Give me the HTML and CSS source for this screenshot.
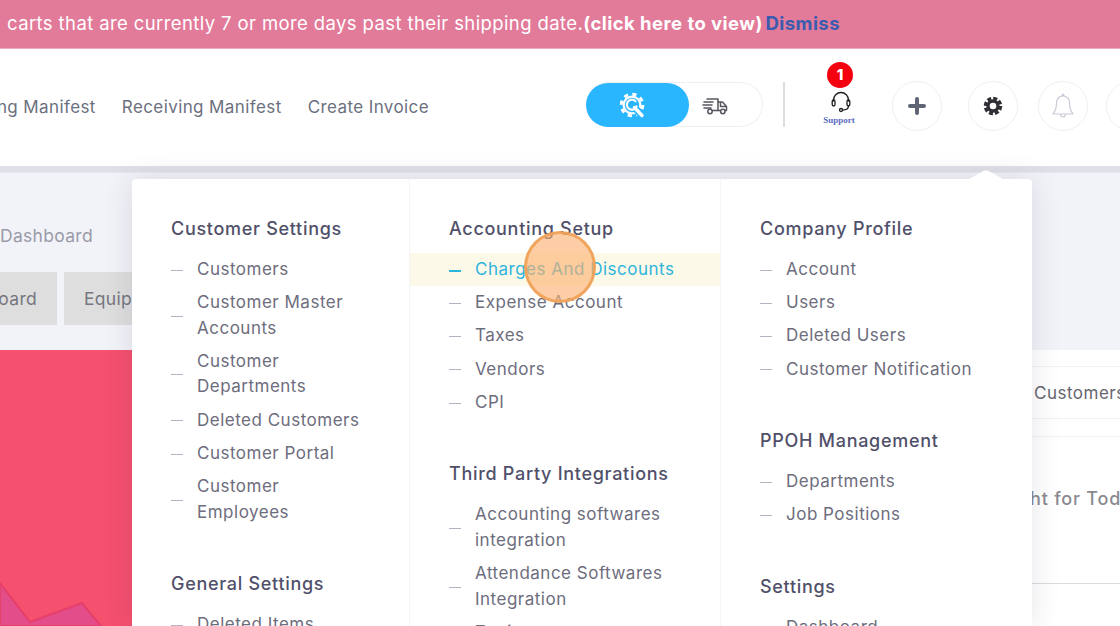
FILE: index.html
```html
<!doctype html>
<html lang="en">
<head>
  <meta charset="utf-8" />
  <meta name="viewport" content="width=device-width,initial-scale=1" />
  <title>Settings menu</title>
  <link rel="stylesheet" href="styles.css">
</head>
<body>
  <!-- Alert banner -->
  <div class="banner">
    <span>All carts that are currently 7 or more days past their shipping date.<b>(click here to view)</b> <b class="dismiss">Dismiss</b></span>
  </div>

  <!-- Header -->
  <header class="topbar">
    <nav class="nav">
      <a>Shipping Manifest</a>
      <a>Receiving Manifest</a>
      <a>Create Invoice</a>
    </nav>

    <div class="toggle">
      <div class="toggleOn">
        <svg width="28" height="28" viewBox="0 0 28 28" fill="none" stroke="#fff">
          <circle cx="13" cy="13" r="10.800" stroke-width="3" stroke-dasharray="4.200 4.280"/>
          <circle cx="13" cy="13" r="8.400" stroke-width="2.300"/>
          <path d="M15.500 15.500l8 8.500" stroke="#29b6ff" stroke-width="7"/>
          <path d="M16.500 9.300a5 5 0 1 0 1 5.200" stroke-width="2.200" stroke-linecap="round"/>
          <path d="M15.500 15.500l7.500 8" stroke-width="3.400" stroke-linecap="round"/>
        </svg>
      </div>
      <div class="toggleOff">
        <svg width="26" height="18" viewBox="0 0 26 18" fill="none" stroke="#55555f" stroke-width="1.500" stroke-linecap="round" stroke-linejoin="round">
          <path d="M5 2h11v11.500h-5.500M2 5h9M1 8h9M2 11h7"/>
          <path d="M16 5h4.500l4 4.500v4h-1.500M16 13.500h2.500M18.500 5.500v4h5.500"/>
          <circle cx="8" cy="14.500" r="2.200"/>
          <circle cx="20.800" cy="14.500" r="2.200"/>
        </svg>
      </div>
    </div>

    <div class="vline"></div>

    <div class="support">
      <span class="badge">1</span>
      <svg width="22" height="22" viewBox="0 0 22 22" fill="none" stroke="#1d1d22" stroke-width="1.300" stroke-linecap="round">
        <path d="M3.500 10V9a7.500 7.500 0 0 1 15 0v1"/>
        <rect x="2.200" y="9" width="2.800" height="6" rx="1.400"/>
        <rect x="17" y="9" width="2.800" height="6" rx="1.400"/>
        <path d="M18.500 15c0 2.500-2.500 4-6 4"/>
        <circle cx="11" cy="19" r="1.500"/>
      </svg>
      <small>Support</small>
    </div>

    <div class="roundBtn">
      <svg width="18" height="18" viewBox="0 0 18 18"><path d="M9 2v14M2 9h14" stroke="#5f6475" stroke-width="4" stroke-linecap="round"/></svg>
    </div>
    <div class="roundBtn">
      <svg width="20" height="20" viewBox="0 0 20 20" fill="none" stroke="#2f2f35">
        <circle cx="10" cy="10" r="7.500" stroke-width="3.600" stroke-dasharray="3.900 1.990"/>
        <circle cx="10" cy="10" r="5" stroke-width="3.400"/>
      </svg>
    </div>
    <div class="roundBtn">
      <svg width="22" height="26" viewBox="0 0 22 26" fill="none" stroke="#c9cad6" stroke-width="1.200" stroke-linejoin="round">
        <path d="M11 3c-4 0-6.500 3-6.500 7 0 5-1 8-3.500 11h20c-2.500-3-3.500-6-3.500-11 0-4-2.500-7-6.500-7zM9.500 3.200 11 1l1.500 2.200M8.500 21c0 2 1 3 2.500 3s2.500-1 2.500-3"/>
      </svg>
    </div>
    <div class="roundBtn"></div>
  </header>

  <!-- Page behind the menu -->
  <main class="page">
    <div class="pageTitle">Dashboard</div>
    <div class="tabs">
      <div class="tab tabFirst">Dashboard</div>
      <div class="tab">Equipment</div>
    </div>
    <div class="cards">
      <div class="pinkCard">
        <svg class="chart" width="132" height="276" viewBox="0 0 132 276"><path d="M0 233 30 272 82 253 101 276 0 276Z" fill="#e24d8a" stroke="#e53f6b" stroke-width="2"/></svg>
      </div>
      <div class="sideCard">
        <div class="sideTop"></div>
        <div class="sideRow">Customers</div>
        <div class="sideGap"></div>
        <div class="sideBody">Freight for Today</div>
      </div>
    </div>
  </main>

  <!-- Settings mega menu -->
  <div class="menu">
    <div class="menuCol">
      <h4>Customer Settings</h4>
      <ul>
        <li>Customers</li>
        <li>Customer Master Accounts</li>
        <li>Customer Departments</li>
        <li>Deleted Customers</li>
        <li>Customer Portal</li>
        <li>Customer Employees</li>
      </ul>
      <h4>General Settings</h4>
      <ul>
        <li>Deleted Items</li>
      </ul>
    </div>
    <div class="menuCol">
      <h4>Accounting Setup</h4>
      <ul>
        <li class="active">Charges And Discounts</li>
        <li>Expense Account</li>
        <li>Taxes</li>
        <li>Vendors</li>
        <li>CPI</li>
      </ul>
      <h4>Third Party Integrations</h4>
      <ul>
        <li>Accounting softwares integration</li>
        <li>Attendance Softwares Integration</li>
        <li>Zapier</li>
      </ul>
    </div>
    <div class="menuCol">
      <h4>Company Profile</h4>
      <ul>
        <li>Account</li>
        <li>Users</li>
        <li>Deleted Users</li>
        <li>Customer Notification</li>
      </ul>
      <h4>PPOH Management</h4>
      <ul>
        <li>Departments</li>
        <li>Job Positions</li>
      </ul>
      <h4>Settings</h4>
      <ul>
        <li>Dashboard</li>
      </ul>
    </div>
  </div>
  <div class="menuArrow"></div>
  <div class="clickDot"></div>
</body>
</html>
```

FILE: styles.css
```css
:root{
  --font: Inter, "Open Sans", "Liberation Sans", sans-serif;
  --line: #f1f1f5;
  --text: #6d6d7d;
  --head: #50506a;
  --blue: #2db4dd;
}

*{ box-sizing:border-box }
html, body{ height:100%; }
body{
  margin:0;
  font-family:var(--font);
  background:#f2f3f8;
  overflow:hidden;
}

/* Banner */
.banner{
  height:49px;
  display:flex;
  align-items:center;
  justify-content:flex-end;
  padding:0 280px 2px 0;
  background:#e27a9a;
  border-bottom:1px solid #e9a9c0;
  color:#fff;
  font-size:18.500px;
  letter-spacing:.39px;
  white-space:nowrap;
  overflow:hidden;
}
.banner span{ flex:none; }
.banner b{ font-weight:700; letter-spacing:.45px; }
.banner .dismiss{ color:#3a5cb0; margin-left:-3px; }

/* Header */
.topbar{
  height:117px;
  padding-bottom:1px;
  display:flex;
  align-items:center;
  background:#fff;
  overflow:hidden;
}
.nav{
  flex:none;
  width:429px;
  display:flex;
  justify-content:flex-end;
  gap:26px;
  margin-right:157px;
  white-space:nowrap;
  overflow:hidden;
  font-size:17px;
  letter-spacing:.4px;
  color:#6b7080;
}
.nav a{ flex:none; }

.toggle{
  flex:none;
  width:177px;
  height:45px;
  margin-top:-6px;
  margin-right:20px;
  display:flex;
  border:1px solid #f0f0f4;
  border-left:0;
  border-radius:23px;
}
.toggleOn{
  width:103px;
  height:44px;
  display:flex;
  align-items:center;
  justify-content:center;
  background:#29b6ff;
  border-radius:22px;
}
.toggleOn svg{ margin:2px 0 0 -9px; }
.toggleOff{
  flex:1;
  display:flex;
  align-items:center;
  justify-content:center;
  padding:3px 22px 0 0;
}
.vline{
  flex:none;
  width:2px;
  height:45px;
  margin-top:-6px;
  margin-right:27px;
  background:#dddde0;
}

.support{
  flex:none;
  position:relative;
  width:54px;
  height:40px;
  margin-top:10px;
  margin-right:26px;
  display:flex;
  flex-direction:column;
  align-items:center;
}
.support svg{ display:block; margin:-1px 0 0 3px; }
.support small{
  font-family:"Liberation Serif", serif;
  font-weight:700;
  font-size:9px;
  line-height:15px;
  color:#5a6bc0;
}
.badge{
  position:absolute;
  left:15px;
  top:-30px;
  width:26px;
  height:26px;
  border-radius:50%;
  background:#f5000f;
  color:#fff;
  font-size:15px;
  font-weight:800;
  line-height:26px;
  text-align:center;
}

.roundBtn{
  flex:none;
  width:50px;
  height:50px;
  margin-top:-2px;
  margin-right:26px;
  display:flex;
  align-items:center;
  justify-content:center;
  border:1px solid #efeff3;
  border-radius:50%;
}
.roundBtn + .roundBtn{ margin-right:20px; }
.roundBtn + .roundBtn + .roundBtn{ margin-right:18px; }

/* Page behind the menu */
.page{
  height:460px;
  padding-top:13px;
  background:linear-gradient(#dfe0e7 0, #dfe0e7 6px, #f2f3f8 7px);
  overflow:hidden;
}
.pageTitle{
  padding-top:44px;
  height:93px;
  font-size:17.500px;
  letter-spacing:.3px;
  color:#9a9aa8;
  line-height:25px;
}
.tabs{
  display:flex;
  gap:7px;
  margin-left:-70px;
  height:53px;
}
.tab{
  display:flex;
  align-items:center;
  padding:0 20px;
  background:#dedede;
  color:#76767e;
  font-size:17.500px;
  letter-spacing:.3px;
}
.tabFirst{ width:127px; justify-content:flex-end; }

.cards{
  display:flex;
  justify-content:space-between;
  margin-top:25px;
  height:276px;
}
.pinkCard{
  width:300px;
  background:#f5506e;
}
.chart{ display:block; }
.sideCard{
  width:300px;
  background:#fff;
}
.sideTop{ height:17px; border-bottom:1px solid var(--line); }
.sideRow{
  height:52px;
  padding-left:214px;
  display:flex;
  align-items:center;
  border-bottom:1px solid var(--line);
  color:#66666f;
  font-size:17px;
  letter-spacing:.5px;
  white-space:nowrap;
}
.sideGap{ height:18px; border-bottom:1px solid var(--line); }
.sideBody{
  height:147px;
  padding:0 0 24px 163px;
  display:flex;
  align-items:center;
  border-bottom:1px solid #dcdcdc;
  color:#8a8a90;
  font-size:18px;
  font-weight:500;
  letter-spacing:.8px;
  white-space:nowrap;
}

/* Mega menu */
.menu{
  position:absolute;
  left:132px;
  top:179px;
  width:900px;
  height:447px;
  display:grid;
  grid-template-columns:278px 311px 311px;
  background:#fff;
  border-radius:4px 4px 0 0;
  box-shadow:0 0 30px rgba(40,40,70,.12);
  overflow:hidden;
}
.menuCol{
  padding-top:34px;
  border-right:1px solid #f5f5f8;
}
.menuCol:last-child{ border-right:0; }
.menuCol h4{
  margin:0;
  padding-left:39px;
  font-size:18px;
  line-height:32px;
  font-weight:500;
  letter-spacing:.7px;
  color:var(--head);
}
.menuCol ul{
  list-style:none;
  margin:8px 0 39px;
  padding:0;
}
.menuCol li{
  display:flex;
  align-items:center;
  padding:3.900px 40px 3.900px 65px;
  position:relative;
  font-size:17px;
  line-height:25.500px;
  letter-spacing:.5px;
  color:var(--text);
}
.menuCol li::before{
  content:"";
  position:absolute;
  left:39px;
  top:50%;
  width:12px;
  height:1px;
  background:#b4b4c0;
}
.menuCol li.active{
  background:#fdf9e8;
  color:var(--blue);
}
.menuCol li.active::before{ background:var(--blue); height:2px; }

.menuArrow{
  position:absolute;
  left:974px;
  top:167px;
  width:24px;
  height:24px;
  background:#fff;
  border-radius:3px;
  transform:scaleY(.55) rotate(45deg);
}
.clickDot{
  position:absolute;
  left:524px;
  top:231px;
  width:72px;
  height:72px;
  border-radius:50%;
  background:rgba(252,176,110,.62);
  border:3px solid rgba(240,160,85,.9);
}
```
